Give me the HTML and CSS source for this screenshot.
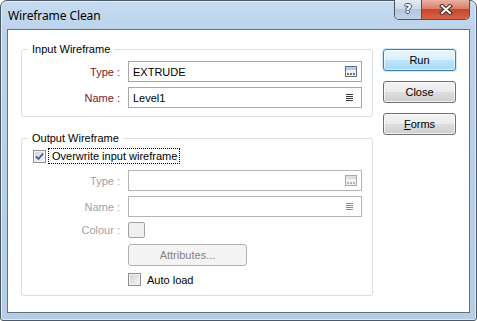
FILE: index.html
```html
<!DOCTYPE html>
<html>
<head>
<meta charset="utf-8">
<link rel="stylesheet" href="styles.css">
</head>
<body>
<div class="window">
  <div class="titlebar">
    <span class="title">Wireframe Clean</span>
    <div class="caption">
      <div class="cap-help">?</div>
      <div class="cap-close">
        <svg width="14" height="11" viewBox="0 0 14 11">
          <path d="M3 2 L11 9 M11 2 L3 9" stroke="#3a2a28" stroke-width="4" stroke-linecap="square" fill="none"/>
          <path d="M3 2 L11 9 M11 2 L3 9" stroke="#ffffff" stroke-width="2" stroke-linecap="square" fill="none"/>
        </svg>
      </div>
    </div>
  </div>
  <div class="client">
    <div class="groups">
      <div class="group group-input">
        <div class="legend">Input Wireframe</div>
        <div class="row first">
          <span class="lbl req">Type :</span>
          <div class="field">
            <span class="val">EXTRUDE</span>
            <svg class="ico-browse" width="12" height="11" viewBox="0 0 12 11">
              <rect x="0.5" y="0.5" width="11" height="10" fill="#eef3f9" stroke="#5a6f8e"/>
              <rect x="1" y="1" width="10" height="3" fill="#b9cbe2"/>
              <rect x="2" y="7" width="2" height="2" fill="#9a6a2c"/>
              <rect x="5" y="7" width="2" height="2" fill="#9a6a2c"/>
              <rect x="8" y="7" width="2" height="2" fill="#9a6a2c"/>
            </svg>
          </div>
        </div>
        <div class="row">
          <span class="lbl req">Name :</span>
          <div class="field">
            <span class="val">Level1</span>
            <svg class="ico-list" width="7" height="8" viewBox="0 0 7 8">
              <path d="M0 0.5 H7 M0 2.5 H7 M0 4.5 H7 M0 6.5 H7" stroke="#3c3c3c" stroke-width="1"/>
            </svg>
          </div>
        </div>
      </div>
      <div class="group group-output">
        <div class="legend">Output Wireframe</div>
        <div class="check-row overwrite">
          <span class="checkbox">
            <svg width="9" height="9" viewBox="0 0 9 9"><path d="M1 4.5 L3.5 7 L8 1.5" stroke="#3f5a9e" stroke-width="1.8" fill="none"/></svg>
          </span>
          <span class="focus">Overwrite input wireframe</span>
        </div>
        <div class="row gap6">
          <span class="lbl dis">Type :</span>
          <div class="field dis">
            <span class="val"></span>
            <svg class="ico-browse" width="12" height="11" viewBox="0 0 12 11">
              <rect x="0.5" y="0.5" width="11" height="10" fill="#f4f4f4" stroke="#a9a9a9"/>
              <rect x="1" y="1" width="10" height="3" fill="#dedede"/>
              <rect x="2" y="7" width="2" height="2" fill="#b5b5b5"/>
              <rect x="5" y="7" width="2" height="2" fill="#b5b5b5"/>
              <rect x="8" y="7" width="2" height="2" fill="#b5b5b5"/>
            </svg>
          </div>
        </div>
        <div class="row">
          <span class="lbl dis">Name :</span>
          <div class="field dis">
            <span class="val"></span>
            <svg class="ico-list" width="7" height="8" viewBox="0 0 7 8">
              <path d="M0 0.5 H7 M0 2.5 H7 M0 4.5 H7 M0 6.5 H7" stroke="#8a8a8a" stroke-width="1"/>
            </svg>
          </div>
        </div>
        <div class="row colour-row">
          <span class="lbl dis">Colour :</span>
          <span class="swatch"></span>
        </div>
        <div class="indent attr-row">
          <button class="btn disabled attr">Attributes...</button>
        </div>
        <div class="indent check-row autoload">
          <span class="checkbox"></span>
          <span class="cb-text">Auto load</span>
        </div>
      </div>
    </div>
    <div class="actions">
      <button class="btn default">Run</button>
      <button class="btn">Close</button>
      <button class="btn"><u>F</u>orms</button>
    </div>
  </div>
</div>
</body>
</html>
```
FILE: styles.css
```css
html, body {
  margin: 0;
  padding: 0;
  background: #ffffff;
}
body {
  font-family: "Liberation Sans", Arial, sans-serif;
  font-size: 11px;
  color: #000;
}
.window {
  width: 477px;
  height: 321px;
  box-sizing: border-box;
  border: 1px solid #4f5a68;
  border-radius: 7px 7px 3px 3px;
  background: linear-gradient(#c6dbf0 0px, #bcd3eb 28px, #b6cde6 321px);
  box-shadow: inset 0 0 0 1px rgba(255,255,255,0.55);
  padding: 0 6px 7px 6px;
  display: flex;
  flex-direction: column;
}
.titlebar {
  height: 28px;
  display: flex;
  justify-content: space-between;
  align-items: flex-start;
  padding-left: 1px;
}
.title {
  align-self: center;
  font-family: "Noto Sans", "Open Sans", sans-serif;
  font-size: 12px;
  color: #000;
  letter-spacing: -0.1px;
}
.caption {
  display: flex;
  margin-top: -1px;
  height: 20px;
  border: 1px solid #4a5563;
  border-top: none;
  border-radius: 0 0 5px 5px;
  overflow: hidden;
  box-sizing: border-box;
}
.cap-help {
  width: 26px;
  height: 100%;
  border-right: 1px solid #4a5563;
  background: linear-gradient(#e4ecf5 0%, #ccdaea 45%, #b3c6dc 50%, #c2d3e6 100%);
  color: #fff;
  font-family: "DejaVu Sans", sans-serif;
  font-weight: bold;
  font-size: 13px;
  line-height: 18px;
  text-align: center;
  text-shadow: 1px 0 0 #3d4a5c, -1px 0 0 #3d4a5c, 0 1px 0 #3d4a5c, 0 -1px 0 #3d4a5c;
}
.cap-close {
  width: 47px;
  height: 100%;
  background: linear-gradient(#eab2a5 0%, #dc7f69 45%, #c9452b 50%, #d4654a 100%);
  display: flex;
  align-items: center;
  justify-content: center;
}
.client {
  flex: 1;
  border: 1px solid #66717e;
  background: #ffffff;
  display: flex;
  align-items: flex-start;
  padding: 19px 0 0 13px;
}
.groups {
  width: 352px;
  display: flex;
  flex-direction: column;
}
.group {
  border: 1px solid #d5dfe5;
  border-radius: 3px;
  padding: 0 10px 8px 0;
  display: flex;
  flex-direction: column;
}
.group-output {
  margin-top: 21px;
}
.legend {
  align-self: flex-start;
  margin: -7px 0 0 6px;
  padding: 0 4px;
  height: 13px;
  line-height: 13px;
  background: #fff;
  color: #000;
}
.row {
  display: flex;
  align-items: center;
  height: 21px;
  margin-top: 5px;
}
.row.gap6 { margin-top: 6px; }
.lbl {
  width: 98px;
  text-align: right;
  margin-right: 8px;
  flex: none;
}
.lbl.req { color: #7e1a22; }
.lbl.dis { color: #a3a3a3; }
.field {
  flex: 1;
  height: 21px;
  box-sizing: border-box;
  border: 1px solid #a7a7a7;
  display: flex;
  align-items: center;
  padding: 0 4px 0 4px;
}
.field .val { flex: 1; }
.field.dis { border-color: #b4b4b4; }
.ico-list { margin-right: 4px; }
.check-row {
  display: flex;
  align-items: center;
}
.overwrite {
  margin: 3px 0 0 11px;
  height: 16px;
}
.checkbox {
  width: 13px;
  height: 13px;
  box-sizing: border-box;
  border: 1px solid #8e8f8f;
  background: linear-gradient(135deg, #d2d2d2, #f6f6f6);
  box-shadow: inset 0 0 0 1px #f4f4f4;
  display: flex;
  align-items: center;
  justify-content: center;
  flex: none;
}
.focus {
  margin-left: 2px;
  border: 1px dotted #000;
  padding: 0 2px 0 3px;
  line-height: 14px;
}
.colour-row { height: 16px; }
.swatch {
  width: 17px;
  height: 16px;
  box-sizing: border-box;
  border: 1px solid #a2a2a2;
  border-radius: 2px;
  background: #f0f0f0;
}
.indent { margin-left: 106px; }
.attr-row { margin-top: 6px; display: flex; }
.autoload { margin-top: 6px; height: 15px; }
.cb-text { margin-left: 6px; }
.btn {
  font-family: "Liberation Sans", Arial, sans-serif;
  font-size: 11px;
  color: #000;
  width: 73px;
  height: 22px;
  padding: 0;
  border: 1px solid #707070;
  border-radius: 3px;
  background: linear-gradient(#f2f2f2 0%, #ebebeb 50%, #dddddd 50%, #cfcfcf 100%);
  box-shadow: inset 0 0 0 1px rgba(255,255,255,0.7);
}
.btn.default {
  border-color: #3c7fb1;
  background: linear-gradient(#eaf6fd 0%, #d9f0fc 50%, #bee6fd 50%, #a7d9f5 100%);
  box-shadow: inset 0 0 0 1px rgba(255,255,255,0.6), 0 0 0 1px rgba(70,160,220,0.25);
}
.btn.disabled {
  border-color: #adb2b5;
  background: #f4f4f4;
  color: #838383;
  box-shadow: none;
}
.btn.attr { width: 119px; }
.actions {
  margin-left: 10px;
  display: flex;
  flex-direction: column;
  gap: 10px;
}
```
